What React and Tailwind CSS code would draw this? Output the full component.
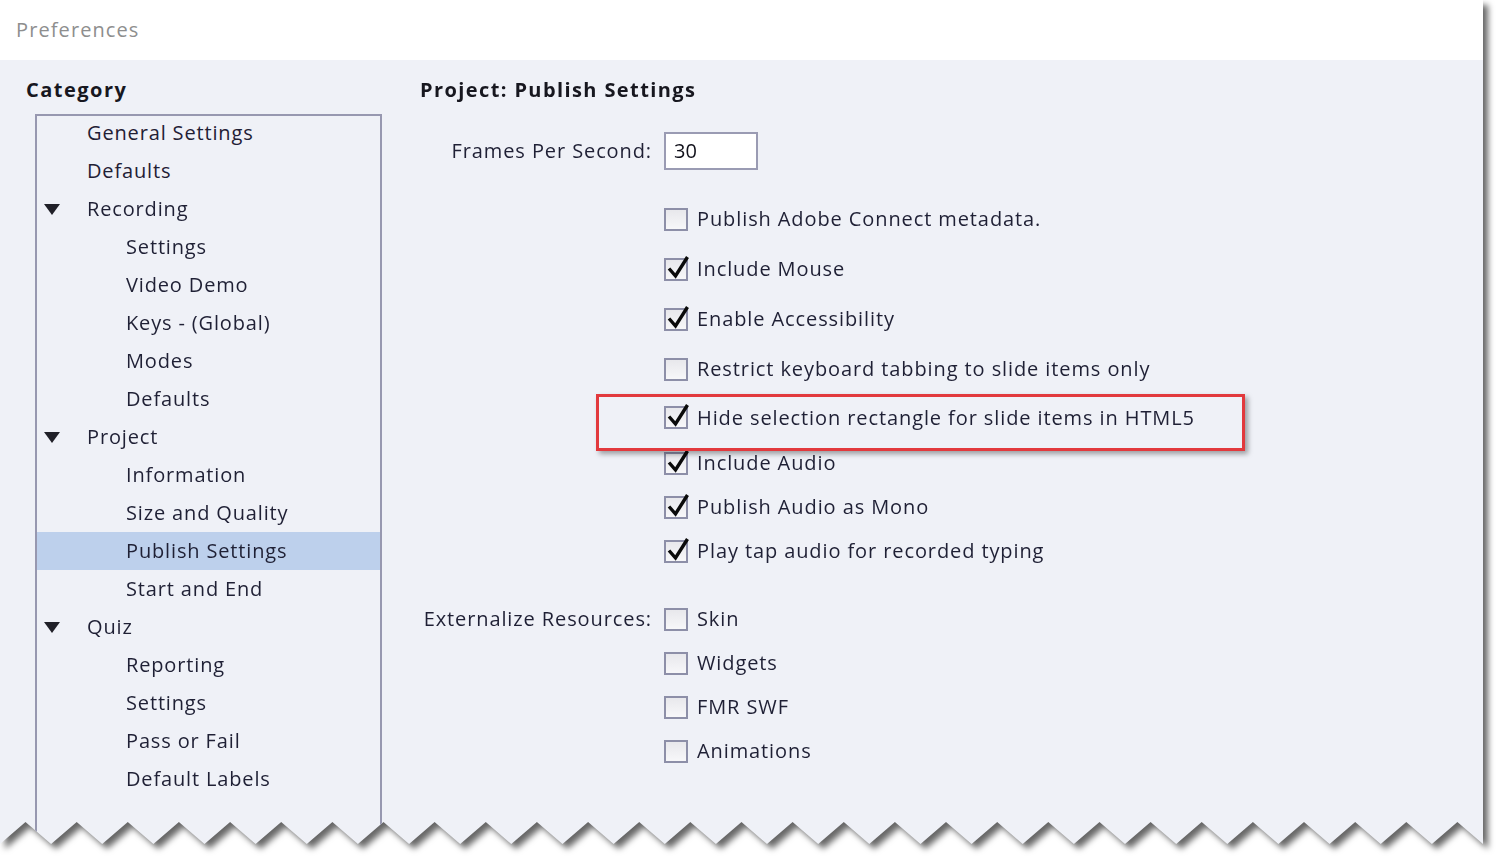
const font = { fontFamily: '"Open Sans", "DejaVu Sans", sans-serif' };

// category tree: level 1 = top item, level 2 = child item
const categories = [
  { label: 'General Settings', level: 1 },
  { label: 'Defaults', level: 1 },
  { label: 'Recording', level: 1, open: true },
  { label: 'Settings', level: 2 },
  { label: 'Video Demo', level: 2 },
  { label: 'Keys - (Global)', level: 2 },
  { label: 'Modes', level: 2 },
  { label: 'Defaults', level: 2 },
  { label: 'Project', level: 1, open: true },
  { label: 'Information', level: 2 },
  { label: 'Size and Quality', level: 2 },
  { label: 'Publish Settings', level: 2, selected: true },
  { label: 'Start and End', level: 2 },
  { label: 'Quiz', level: 1, open: true },
  { label: 'Reporting', level: 2 },
  { label: 'Settings', level: 2 },
  { label: 'Pass or Fail', level: 2 },
  { label: 'Default Labels', level: 2 },
];

const publishOptions = [
  { label: 'Publish Adobe Connect metadata.', checked: false, h: 'h-[50px]' },
  { label: 'Include Mouse', checked: true, h: 'h-[50px]' },
  { label: 'Enable Accessibility', checked: true, h: 'h-[50px]' },
  { label: 'Restrict keyboard tabbing to slide items only', checked: false, h: 'h-[50px]' },
  { label: 'Hide selection rectangle for slide items in HTML5', checked: true, h: 'h-[47px]' },
  { label: 'Include Audio', checked: true, h: 'h-[44px]' },
  { label: 'Publish Audio as Mono', checked: true, h: 'h-[44px]' },
  { label: 'Play tap audio for recorded typing', checked: true, h: 'h-[44px]' },
];

const externalize = ['Skin', 'Widgets', 'FMR SWF', 'Animations'];

// torn bottom edge of the screenshot sheet
function tornEdge(width, peakY, valleyY, period) {
  const pts = ['0px 0px', `${width}px 0px`, `${width}px ${valleyY}px`];
  let x = width;
  let up = true;
  while (x > 0) {
    x -= period / 2;
    const px = Math.max(x, 0);
    pts.push(`${px.toFixed(1)}px ${up ? peakY : valleyY}px`);
    up = !up;
  }
  pts.push(`0px ${valleyY}px`);
  return `polygon(${pts.join(', ')})`;
}

function Checkbox({ checked }) {
  return (
    <div className="relative w-[24px] h-[23px] shrink-0 border-2 border-[#8d8fa8] bg-gradient-to-b from-[#e8e8ec] to-[#f7f7f9]">
      {checked && (
        <svg className="absolute left-0 top-0 overflow-visible" width="24" height="23" viewBox="0 0 24 23">
          <path d="M3 8.5 L9.5 16 L21.5 -3" fill="none" stroke="#0a0a0a" strokeWidth="3.4" />
        </svg>
      )}
    </div>
  );
}

function OptionRow({ label, checked, h }) {
  return (
    <div className={`flex items-center gap-[9px] ${h}`}>
      <Checkbox checked={checked} />
      <span className="text-[20px] leading-none tracking-[0.9px] text-[#1f2035]">{label}</span>
    </div>
  );
}

export default function App() {
  return (
    <div className="relative w-[1498px] h-[862px] bg-white overflow-hidden" style={font}>
      <div className="drop-shadow-[5px_5px_3px_rgba(0,0,0,0.6)] w-[1483px]">
        <div
          className="flex flex-col w-[1483px] h-[848px] bg-[#eff1f7]"
          style={{ clipPath: tornEdge(1483, 822, 844, 51.14) }}
        >
          {/* title bar */}
          <div className="h-[60px] bg-white flex items-center px-4">
            <span className="text-[20px] tracking-[1.1px] text-[#8e8e8e]">Preferences</span>
          </div>

          <div className="flex-1 flex min-h-0">
            {/* category tree */}
            <div className="w-[420px] flex flex-col pl-[26px] pt-[16px]">
              <h2 className="text-[20px] leading-[28px] font-bold tracking-[1.5px] text-[#17171f]">Category</h2>
              <div className="mt-[10px] ml-[9px] w-[347px] flex-1 border-2 border-[#9798b0] border-b-0">
                <div className="-mt-[2px]">
                  {categories.map((c, i) => (
                    <div
                      key={i}
                      className={`h-[38px] flex items-center ${c.selected ? 'bg-[#bdd0ec]' : ''}`}
                    >
                      <div className="w-[50px] flex items-center pl-[7px]">
                        {c.open && (
                          <svg width="16" height="11" viewBox="0 0 16 11">
                            <path d="M0 0 H16 L8 11 Z" fill="#202028" />
                          </svg>
                        )}
                      </div>
                      <span
                        className={`text-[20px] leading-none tracking-[0.85px] text-[#1f2035] ${c.level === 2 ? 'ml-[39px]' : ''}`}
                      >
                        {c.label}
                      </span>
                    </div>
                  ))}
                </div>
              </div>
            </div>

            {/* publish settings */}
            <div className="flex-1 pt-[16px]">
              <h2 className="text-[20px] leading-[28px] font-bold tracking-[1.4px] text-[#17171f]">Project: Publish Settings</h2>
              <div className="grid grid-cols-[232px_1fr] gap-x-3 mt-[28px]">
                <div className="flex items-center justify-end">
                  <span className="text-[20px] tracking-[0.9px] text-[#1f2035]">Frames Per Second:</span>
                </div>
                <div className="flex items-center">
                  <div className="w-[94px] h-[38px] border-2 border-[#9a9bb3] bg-white flex items-center pl-[8px] text-[20px] text-[#10101a]">
                    30
                  </div>
                </div>

                <div />
                <div className="mt-[24px]">
                  {publishOptions.map((o) => (
                    <OptionRow key={o.label} {...o} />
                  ))}
                </div>

                <div className="mt-[24px] h-[44px] flex items-center justify-end">
                  <span className="text-[20px] tracking-[0.9px] text-[#1f2035]">Externalize Resources:</span>
                </div>
                <div className="mt-[24px]">
                  {externalize.map((label) => (
                    <OptionRow key={label} label={label} checked={false} h="h-[44px]" />
                  ))}
                </div>
              </div>
            </div>
          </div>
        </div>
      </div>

      {/* red callout around the HTML5 option */}
      <div className="absolute left-[596px] top-[394px] w-[649px] h-[57px] border-[3px] border-[#e2393d] shadow-[3px_3px_5px_rgba(0,0,0,0.35)]" />
    </div>
  );
}
